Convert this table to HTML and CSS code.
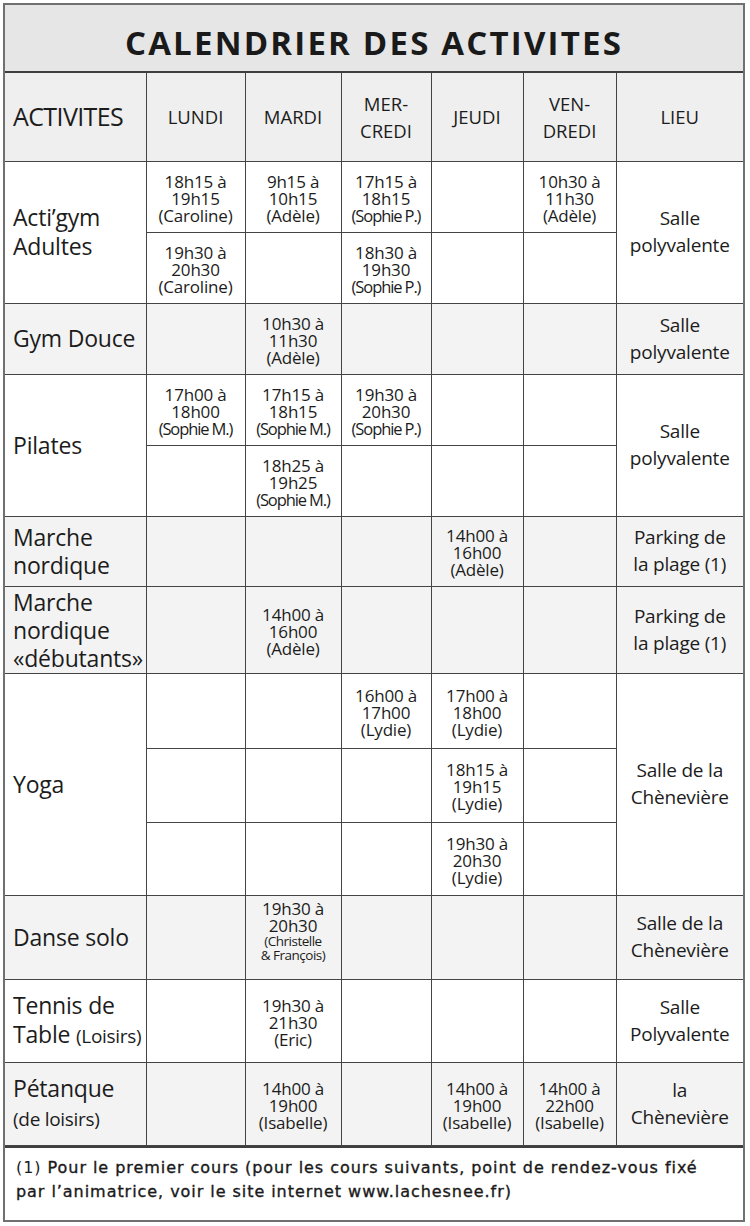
FILE: index.html
```html
<!DOCTYPE html>
<html lang="fr">
<head>
<meta charset="utf-8">
<title>Calendrier des activites</title>
<link rel="stylesheet" href="styles.css">
</head>
<body>
<div class="sheet">
  <div class="title">CALENDRIER DES ACTIVITES</div>
  <table class="cal">
    <colgroup>
      <col class="c-act"><col class="c-lun"><col class="c-mar"><col class="c-mer"><col class="c-jeu"><col class="c-ven"><col class="c-lieu">
    </colgroup>
    <thead>
      <tr class="head">
        <th class="h-act">ACTIVITES</th>
        <th>LUNDI</th>
        <th>MARDI</th>
        <th>MER-<br>CREDI</th>
        <th>JEUDI</th>
        <th>VEN-<br>DREDI</th>
        <th>LIEU</th>
      </tr>
    </thead>
    <tbody>
      <tr class="r71">
        <td class="act" rowspan="2">Acti’gym<br>Adultes</td>
        <td class="t">18h15 à<br>19h15<br>(Caroline)</td>
        <td class="t">9h15 à<br>10h15<br>(Adèle)</td>
        <td class="t">17h15 à<br>18h15<br><span class="cn">(Sophie P.)</span></td>
        <td></td>
        <td class="t">10h30 à<br>11h30<br>(Adèle)</td>
        <td class="lieu" rowspan="2">Salle<br>polyvalente</td>
      </tr>
      <tr class="r71">
        <td class="t">19h30 à<br>20h30<br>(Caroline)</td>
        <td></td>
        <td class="t">18h30 à<br>19h30<br><span class="cn">(Sophie P.)</span></td>
        <td></td>
        <td></td>
      </tr>
      <tr class="r71 grey">
        <td class="act">Gym Douce</td>
        <td></td>
        <td class="t">10h30 à<br>11h30<br>(Adèle)</td>
        <td></td>
        <td></td>
        <td></td>
        <td class="lieu">Salle<br>polyvalente</td>
      </tr>
      <tr class="r71">
        <td class="act" rowspan="2">Pilates</td>
        <td class="t">17h00 à<br>18h00<br><span class="cn">(Sophie M.)</span></td>
        <td class="t">17h15 à<br>18h15<br><span class="cn">(Sophie M.)</span></td>
        <td class="t">19h30 à<br>20h30<br><span class="cn">(Sophie P.)</span></td>
        <td></td>
        <td></td>
        <td class="lieu" rowspan="2">Salle<br>polyvalente</td>
      </tr>
      <tr class="r71">
        <td></td>
        <td class="t">18h25 à<br>19h25<br><span class="cn">(Sophie M.)</span></td>
        <td></td>
        <td></td>
        <td></td>
      </tr>
      <tr class="r70 grey">
        <td class="act act-tight">Marche<br>nordique</td>
        <td></td>
        <td></td>
        <td></td>
        <td class="t">14h00 à<br>16h00<br>(Adèle)</td>
        <td></td>
        <td class="lieu">Parking de<br>la plage (1)</td>
      </tr>
      <tr class="r87 grey">
        <td class="act act-tight">Marche<br>nordique<br>«débutants»</td>
        <td></td>
        <td class="t">14h00 à<br>16h00<br>(Adèle)</td>
        <td></td>
        <td></td>
        <td></td>
        <td class="lieu">Parking de<br>la plage (1)</td>
      </tr>
      <tr class="r75">
        <td class="act" rowspan="3">Yoga</td>
        <td></td>
        <td></td>
        <td class="t">16h00 à<br>17h00<br>(Lydie)</td>
        <td class="t">17h00 à<br>18h00<br>(Lydie)</td>
        <td></td>
        <td class="lieu" rowspan="3">Salle de la<br>Chènevière</td>
      </tr>
      <tr class="r74">
        <td></td>
        <td></td>
        <td></td>
        <td class="t">18h15 à<br>19h15<br>(Lydie)</td>
        <td></td>
      </tr>
      <tr class="r73">
        <td></td>
        <td></td>
        <td></td>
        <td class="t">19h30 à<br>20h30<br>(Lydie)</td>
        <td></td>
      </tr>
      <tr class="r84 grey">
        <td class="act">Danse solo</td>
        <td></td>
        <td class="t t-top">19h30 à<br>20h30<br><span class="small">(Christelle<br>&amp; François)</span></td>
        <td></td>
        <td></td>
        <td></td>
        <td class="lieu">Salle de la<br>Chènevière</td>
      </tr>
      <tr class="r83">
        <td class="act">Tennis de<br>Table <span class="sub">(Loisirs)</span></td>
        <td></td>
        <td class="t">19h30 à<br>21h30<br>(Eric)</td>
        <td></td>
        <td></td>
        <td></td>
        <td class="lieu">Salle<br>Polyvalente</td>
      </tr>
      <tr class="r83 grey">
        <td class="act">Pétanque<br><span class="sub">(de loisirs)</span></td>
        <td></td>
        <td class="t">14h00 à<br>19h00<br>(Isabelle)</td>
        <td></td>
        <td class="t">14h00 à<br>19h00<br>(Isabelle)</td>
        <td class="t">14h00 à<br>22h00<br>(Isabelle)</td>
        <td class="lieu">la<br>Chènevière</td>
      </tr>
    </tbody>
  </table>
  <div class="note"><p class="note-line"><span class="n1">(1)</span> Pour le premier cours (pour les cours suivants, point de rendez-vous fixé</p><p class="note-line">par l’animatrice, voir le site internet www.lachesnee.fr)</p></div>
</div>
</body>
</html>
```

FILE: styles.css
```css
html, body {
  margin: 0;
  padding: 0;
  background: #ffffff;
}

body {
  font-family: "Open Sans", "Noto Sans", sans-serif;
  color: #1c1c1c;
}

.sheet {
  margin: 3px 0 0 3px;
  width: 738px;
  border: 2px solid #707070;
  background: #ffffff;
}

.title {
  height: 68px;
  box-sizing: border-box;
  border-bottom: 2px solid #3e3e3e;
  background: #e6e6e6;
  display: flex;
  align-items: center;
  justify-content: center;
  font-family: "Open Sans", sans-serif;
  font-weight: 700;
  font-size: 33px;
  letter-spacing: 2.2px;
  color: #1a1a1a;
  padding-top: 9px;
}

.cal {
  width: 738px;
  table-layout: fixed;
  border-collapse: collapse;
}

.c-act { width: 141px; }
.c-lun { width: 99px; }
.c-mar { width: 96px; }
.c-mer { width: 90px; }
.c-jeu { width: 92px; }
.c-ven { width: 93px; }
.c-lieu { width: 127px; }

.cal th,
.cal td {
  border: 1.5px solid #444444;
  padding: 0;
  text-align: center;
  vertical-align: middle;
}

.cal tr > :first-child { border-left: none; }
.cal tr > :last-child { border-right: none; }
.cal thead th { border-top: none; }

.head {
  height: 88px;
  background: #efefef;
}

.head th {
  font-weight: 400;
  font-size: 18.5px;
  line-height: 27px;
  color: #1c1c1c;
}

.head th.h-act {
  text-align: left;
  padding-left: 8px;
  font-size: 25px;
  letter-spacing: -0.6px;
}

.r70 { height: 70px; }
.r71 { height: 71px; }
.r73 { height: 73px; }
.r74 { height: 74px; }
.r75 { height: 75px; }
.r83 { height: 83px; }
.r84 { height: 84px; }
.r87 { height: 87px; }

.grey { background: #f3f3f3; }

.act {
  text-align: left !important;
  padding-left: 8px !important;
  font-size: 23px;
  line-height: 29px;
  letter-spacing: -0.2px;
}

.act-tight { line-height: 28px; }

.act .sub {
  font-size: 19px;
  letter-spacing: -0.3px;
}

.t {
  font-size: 17px;
  line-height: 17px;
  letter-spacing: -0.2px;
  padding-top: 3px !important;
}

.t .cn {
  letter-spacing: -1.1px;
  font-size: 16.5px;
}

.t .small {
  font-size: 13.5px;
  line-height: 14px;
  letter-spacing: -0.5px;
  display: inline-block;
}

.t-top {
  vertical-align: top !important;
  padding-top: 4px !important;
}

.lieu {
  font-size: 19px;
  line-height: 27px;
  letter-spacing: -0.2px;
}

.note {
  border-top: 2px solid #3e3e3e;
  height: 74px;
  box-sizing: border-box;
  padding: 8px 6px 0 11px;
  font-family: "DejaVu Sans", "Open Sans", sans-serif;
  font-weight: 400;
  font-size: 16px;
  line-height: 24px;
  letter-spacing: 0.95px;
  color: #1a1a1a;
  -webkit-text-stroke: 0.35px #1a1a1a;
}

.note-line {
  margin: 0;
  white-space: nowrap;
}

.note .n1 {
  -webkit-text-stroke: 0;
}
```
